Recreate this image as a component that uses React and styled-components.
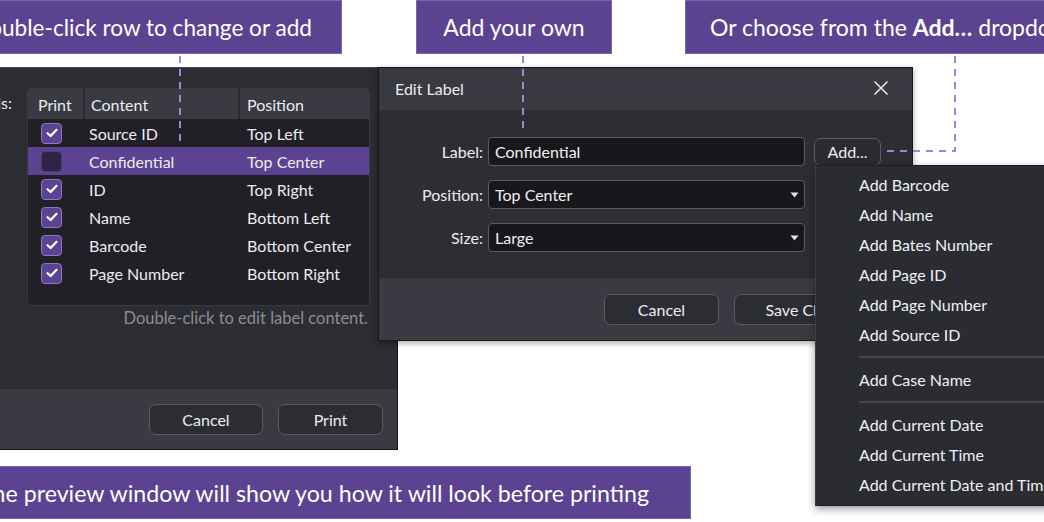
import React from "react";
import styled, { createGlobalStyle } from "styled-components";

const GlobalStyle = createGlobalStyle`
  html, body {
    margin: 0;
    padding: 0;
    background: #ffffff;
  }
  body {
    font-family: Lato, "Noto Sans", sans-serif;
    -webkit-font-smoothing: antialiased;
  }
`;

const labels = [
    { content: "Source ID", position: "Top Left", print: true },
    { content: "Confidential", position: "Top Center", print: false, selected: true },
    { content: "ID", position: "Top Right", print: true },
    { content: "Name", position: "Bottom Left", print: true },
    { content: "Barcode", position: "Bottom Center", print: true },
    { content: "Page Number", position: "Bottom Right", print: true },
];

const menuGroups = [
    ["Add Barcode", "Add Name", "Add Bates Number", "Add Page ID", "Add Page Number", "Add Source ID"],
    ["Add Case Name"],
    ["Add Current Date", "Add Current Time", "Add Current Date and Time"],
];

const Check = ({ on }) => (
    <CheckBox $on={on}>
        {on && (
            <svg width="12" height="10" viewBox="0 0 12 10">
                <polyline points="1.5,5.2 4.6,8 10.5,1.8" fill="none" stroke="#fff" strokeWidth="2.2" strokeLinecap="round" strokeLinejoin="round" />
            </svg>
        )}
    </CheckBox>
);

const Caret = () => (
    <svg width="9" height="6" viewBox="0 0 9 6">
        <polygon points="0.5,0.5 8.5,0.5 4.5,5.5" fill="#e2e2e6" />
    </svg>
);

const Connectors = () => (
    <Overlay width="1044" height="522" viewBox="0 0 1044 522">
        <g stroke="#9c86d6" strokeWidth="2" strokeDasharray="7 6" fill="none">
            <line x1="180" y1="56" x2="180" y2="142" />
            <line x1="523" y1="56" x2="523" y2="130" />
            <polyline points="955,56 955,151 886,151" />
        </g>
    </Overlay>
);

const App = () => {
    return (
        <Stage>
            <GlobalStyle />

            <Callout $left={-80} $top={0} $width={422} $align="flex-end" $padR={29} $size={22.6}>
                Double-click row to change or add
            </Callout>
            <Callout $left={416} $top={0} $width={196} $align="center">
                Add your own
            </Callout>
            <Callout $left={685} $top={0} $width={420} $align="flex-start" $padL={24}>
                Or choose from the&nbsp;<b>Add…</b>&nbsp;dropdown
            </Callout>

            <PrintWindow>
                <PrintBody>
                    <FieldLabel>Labels:</FieldLabel>
                    <div>
                        <Table>
                            <HeaderRow>
                                <HeadCell $pad={10}>Print</HeadCell>
                                <HeadCell $pad={6}>Content</HeadCell>
                                <HeadCell $pad={7}>Position</HeadCell>
                            </HeaderRow>
                            {labels.map((row) => (
                                <Row key={row.content} $selected={row.selected}>
                                    <CheckCell>
                                        <Check on={row.print} />
                                    </CheckCell>
                                    <Cell>{row.content}</Cell>
                                    <Cell $pad={9}>{row.position}</Cell>
                                </Row>
                            ))}
                        </Table>
                        <Hint>Double-click to edit label content.</Hint>
                    </div>
                </PrintBody>
                <Footer $height={60} $padR={14}>
                    <Button $width={114}>Cancel</Button>
                    <Button $width={105}>Print</Button>
                </Footer>
            </PrintWindow>

            <EditWindow>
                <TitleBar>
                    <span>Edit Label</span>
                    <svg width="14" height="14" viewBox="0 0 14 14">
                        <path d="M1 1 L13 13 M13 1 L1 13" stroke="#e6e6ea" strokeWidth="1.6" strokeLinecap="round" />
                    </svg>
                </TitleBar>
                <Form>
                    <FormLabel>Label:</FormLabel>
                    <Input>Confidential</Input>
                    <SmallButton>Add...</SmallButton>

                    <FormLabel>Position:</FormLabel>
                    <Input>
                        Top Center
                        <Caret />
                    </Input>
                    <span />

                    <FormLabel>Size:</FormLabel>
                    <Input>
                        Large
                        <Caret />
                    </Input>
                    <span />
                </Form>
                <Footer $height={62} $padR={18}>
                    <Button $width={115}>Cancel</Button>
                    <Button $width={160}>Save Changes</Button>
                </Footer>
            </EditWindow>

            <Menu>
                {menuGroups.map((group, i) => (
                    <React.Fragment key={i}>
                        {i > 0 && <Separator />}
                        {group.map((item) => (
                            <MenuItem key={item}>{item}</MenuItem>
                        ))}
                    </React.Fragment>
                ))}
            </Menu>

            <Callout $left={-60} $top={466} $width={751} $align="flex-end" $padR={41} $height={53} $size={23.2}>
                The preview window will show you how it will look before printing
            </Callout>

            <Connectors />
        </Stage>
    );
};

const Stage = styled.div`
    position: relative;
    width: 1044px;
    height: 522px;
    overflow: hidden;
    background: #ffffff;
    color: #ececf0;
    font-size: 16px;
`;

const Overlay = styled.svg`
    position: absolute;
    left: 0;
    top: 0;
    pointer-events: none;
`;

const Callout = styled.div`
    position: absolute;
    left: ${(p) => p.$left}px;
    top: ${(p) => p.$top}px;
    width: ${(p) => p.$width}px;
    height: ${(p) => p.$height || 54}px;
    box-sizing: border-box;
    display: flex;
    align-items: center;
    justify-content: ${(p) => p.$align};
    padding: 0 ${(p) => p.$padR || 0}px 0 ${(p) => p.$padL || 0}px;
    background: #5b4391;
    border: 1px solid #7a66b0;
    color: #ffffff;
    font-size: ${(p) => p.$size || 23}px;
    white-space: nowrap;
    b {
        font-weight: 700;
    }
`;

const PrintWindow = styled.div`
    position: absolute;
    left: -100px;
    top: 67px;
    width: 498px;
    height: 383px;
    box-sizing: border-box;
    display: flex;
    flex-direction: column;
    background: #2c2c33;
    border: 1px solid #151518;
    border-top-color: #4a4a52;
`;

const PrintBody = styled.div`
    flex: 1;
    display: flex;
    gap: 15px;
    padding-top: 20px;
`;

const FieldLabel = styled.div`
    width: 111px;
    text-align: right;
    line-height: 30px;
`;

const Table = styled.div`
    width: 343px;
    height: 218px;
    box-sizing: border-box;
    background: #202026;
    border: 1px solid #3a3a42;
    border-radius: 4px;
    overflow: hidden;
`;

const columns = "55px 155px 1fr";

const HeaderRow = styled.div`
    display: grid;
    grid-template-columns: ${columns};
    height: 30px;
    background: #3a3a43;
`;

const HeadCell = styled.div`
    display: flex;
    align-items: center;
    padding-left: ${(p) => p.$pad}px;
    border-left: 2px solid #2a2a30;
    &:first-child {
        border-left: none;
    }
`;

const Row = styled.div`
    display: grid;
    grid-template-columns: ${columns};
    height: 28px;
    background: ${(p) => (p.$selected ? "#5b4391" : "transparent")};
`;

const Cell = styled.div`
    display: flex;
    align-items: center;
    padding-left: ${(p) => p.$pad || 6}px;
`;

const CheckCell = styled.div`
    display: flex;
    align-items: center;
    padding-left: 13px;
`;

const CheckBox = styled.div`
    width: 21px;
    height: 21px;
    box-sizing: border-box;
    display: flex;
    align-items: center;
    justify-content: center;
    border-radius: 4px;
    background: ${(p) => (p.$on ? "#5b4391" : "#2d2448")};
    border: 1px solid ${(p) => (p.$on ? "#8a78c0" : "#4a3f6e")};
`;

const Hint = styled.div`
    margin-top: 2px;
    text-align: right;
    color: #8c8c94;
    font-size: 16.5px;
    line-height: 20px;
    padding-right: 2px;
`;

const Footer = styled.div`
    height: ${(p) => p.$height}px;
    display: flex;
    align-items: center;
    justify-content: flex-end;
    gap: 15px;
    padding-right: ${(p) => p.$padR}px;
    background: #3a3a42;
`;

const Button = styled.div`
    width: ${(p) => p.$width}px;
    height: 31px;
    box-sizing: border-box;
    display: flex;
    align-items: center;
    justify-content: center;
    background: #2c2c33;
    border: 1px solid #5c5c66;
    border-radius: 7px;
    color: #ececf0;
    white-space: nowrap;
`;

const EditWindow = styled.div`
    position: absolute;
    left: 378px;
    top: 67px;
    width: 535px;
    height: 274px;
    box-sizing: border-box;
    display: flex;
    flex-direction: column;
    background: #2d2d34;
    border: 1px solid #18181c;
    box-shadow: 0 2px 6px rgba(0, 0, 0, 0.35);
`;

const TitleBar = styled.div`
    height: 42px;
    display: flex;
    align-items: center;
    justify-content: space-between;
    padding: 0 24px 2px 16px;
    box-sizing: border-box;
    background: #393942;
`;

const Form = styled.div`
    flex: 1;
    display: grid;
    grid-template-columns: 104px 317px 71px;
    grid-auto-rows: 29px;
    column-gap: 5px;
    row-gap: 14px;
    align-items: center;
    padding-top: 27px;
    & > :nth-child(3) {
        margin-left: 4px;
    }
`;

const FormLabel = styled.div`
    text-align: right;
`;

const Input = styled.div`
    height: 29px;
    box-sizing: border-box;
    display: flex;
    align-items: center;
    justify-content: space-between;
    padding: 0 5px 0 6px;
    background: #18181c;
    border: 1px solid #5c5c66;
    border-radius: 4px;
    color: #f0f0f2;
`;

const SmallButton = styled.div`
    height: 28px;
    box-sizing: border-box;
    display: flex;
    align-items: center;
    justify-content: center;
    background: #2a2a30;
    border: 1px solid #5c5c66;
    border-radius: 7px;
`;

const Menu = styled.div`
    position: absolute;
    left: 815px;
    top: 165px;
    width: 260px;
    height: 341px;
    box-sizing: border-box;
    padding: 3px 0;
    background: #2b2b32;
    border: 1px solid #1b1b1f;
    border-left-color: #3e3e46;
    box-shadow: 0 3px 8px rgba(0, 0, 0, 0.4);
`;

const MenuItem = styled.div`
    height: 30px;
    display: flex;
    align-items: center;
    padding-left: 43px;
    white-space: nowrap;
    color: #f0f0f2;
`;

const Separator = styled.div`
    height: 15px;
    display: flex;
    align-items: center;
    padding-left: 43px;
    &::after {
        content: "";
        flex: 1;
        height: 2px;
        background: #46464e;
    }
`;

export default App;
